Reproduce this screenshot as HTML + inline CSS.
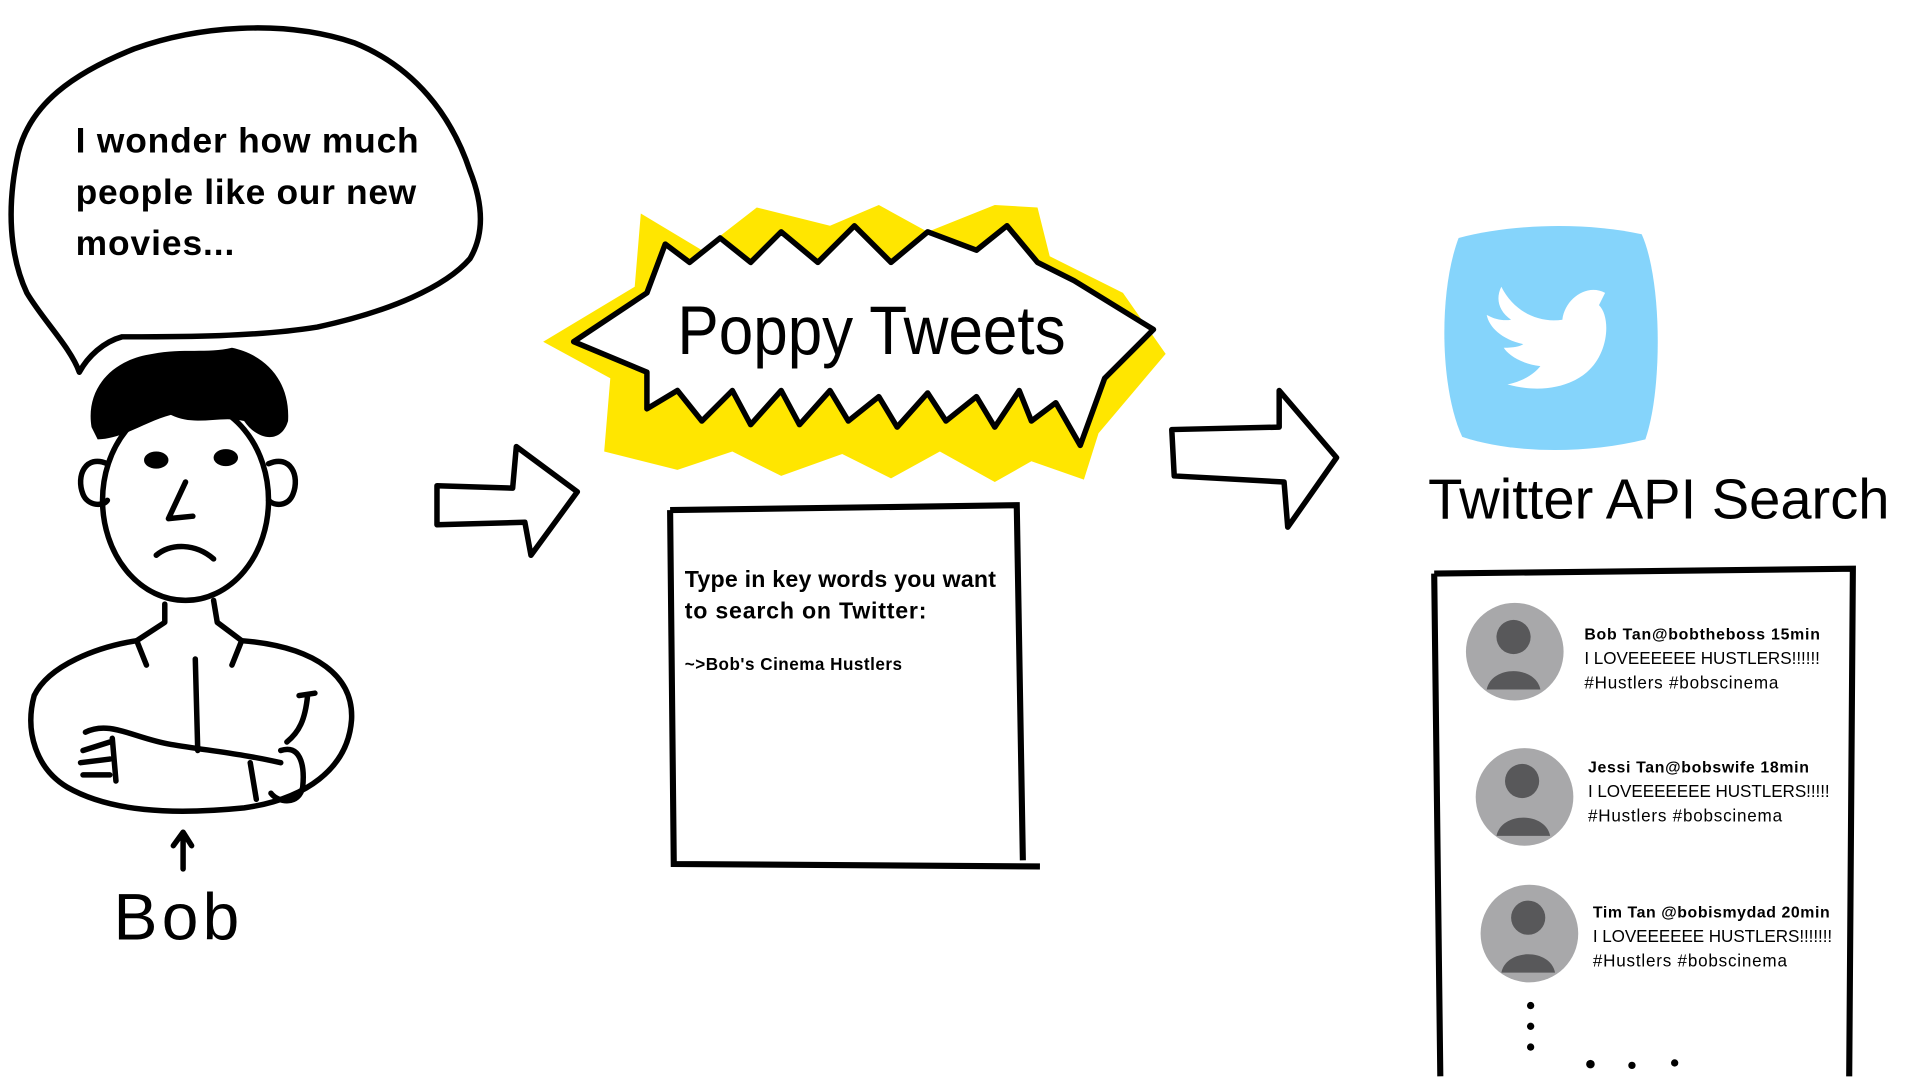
<!DOCTYPE html>
<html><head><meta charset="utf-8"><style>
html,body{margin:0;padding:0;background:#fff;width:1920px;height:1080px;overflow:hidden}
svg{display:block}
text{font-family:"Liberation Sans",sans-serif}
</style></head><body>
<svg width="1920" height="1080" viewBox="0 0 1573 885" preserveAspectRatio="none" xmlns="http://www.w3.org/2000/svg">
<rect width="1573" height="885" fill="#fff"/>
<g fill="none" stroke="#000" stroke-width="4.5" stroke-linecap="round" stroke-linejoin="round">
<path d="M65 305 C58 285 35 262 22 240 C8 210 5 170 15 125 C25 85 60 60 110 40 C160 22 230 15 290 35 C340 55 370 95 385 140 C395 165 398 190 385 212 C365 235 320 255 260 268 C210 276 150 276 100 276 C85 280 72 292 65 305"/>
<ellipse cx="152" cy="410" rx="68" ry="82"/>
<path d="M88 380 C70 372 62 390 68 405 C72 415 85 415 88 410"/>
<path d="M220 380 C238 372 246 390 240 405 C236 415 225 415 220 410"/>
<path d="M152 395 L138 425 L158 423"/>
<path d="M128 455 C140 445 160 445 175 458"/>
<path d="M135 495 L135 510 L112 525 L120 545 M175 492 L178 510 L198 525 L190 545"/>
<path d="M112 525 C80 530 40 545 28 570 C20 600 30 630 55 645 C90 665 140 668 200 662 C250 655 285 630 288 590 C290 555 260 530 198 525"/>
<path d="M160 540 L162 615"/>
<path d="M70 600 C90 590 110 605 140 610 C170 615 200 618 230 625"/>
<path d="M92 605 L95 640 M205 625 L210 655"/>
<path d="M68 615 L90 608 M66 625 L90 622 M68 635 L90 635"/>
<path d="M230 615 C245 610 250 625 248 645 C245 660 228 658 222 650"/>
<path d="M245 570 L258 568 M252 570 C250 590 245 600 235 608"/>
<path d="M150 712 L150 683 M142 693 L150 682 L157 693"/>
<path d="M358 398 L420 400 L423 366 L473 403 L435 455 L430 428 L358 430 Z"/>
<path d="M960 352 L1048 350 L1048 320 L1095 375 L1055 432 L1052 395 L962 390 Z"/>
</g>
<path d="M75 350 C70 320 90 295 125 290 C150 285 170 290 190 285 C215 290 238 310 236 345 C230 365 210 360 200 345 C180 340 160 350 140 340 C120 345 100 360 80 360 Z" fill="#000"/>
<ellipse cx="128" cy="377" rx="10" ry="7" fill="#000"/>
<ellipse cx="185" cy="375" rx="10" ry="7" fill="#000"/>
<text x="62" y="125" font-size="29" font-weight="bold" textLength="281">I wonder how much</text>
<text x="62" y="167" font-size="29" font-weight="bold" textLength="279">people like our new</text>
<text x="62" y="209" font-size="29" font-weight="bold" textLength="130">movies...</text>
<text x="93" y="770" font-size="54" textLength="103">Bob</text>
<path d="M445 280 L520 235 L525 175 L575 205 L620 170 L680 185 L720 168 L760 190 L815 168 L850 170 L860 210 L920 240 L955 290 L900 355 L888 393 L845 378 L815 395 L770 370 L730 392 L690 372 L640 390 L600 370 L555 385 L495 370 L500 310 Z" fill="#ffe600"/>
<path d="M470 280 L530 240 L545 200 L565 215 L590 195 L615 215 L640 190 L670 215 L700 185 L730 215 L760 190 L800 205 L825 185 L850 215 L880 230 L945 270 L905 310 L885 365 L865 330 L845 345 L835 320 L815 350 L800 325 L775 345 L760 322 L735 350 L720 325 L695 345 L680 320 L655 348 L640 320 L615 348 L600 320 L575 345 L555 320 L530 335 L530 305 Z" fill="#fff" stroke="#000" stroke-width="4.5" stroke-linejoin="round"/>
<text x="555" y="290" font-size="56" textLength="318" lengthAdjust="spacingAndGlyphs">Poppy Tweets</text>
<path d="M549 418 L833 414 L838 705 M852 710 L552 708 L549 418" fill="none" stroke="#000" stroke-width="5"/>
<text x="561" y="481" font-size="19" font-weight="bold" textLength="255">Type in key words you want</text>
<text x="561" y="507" font-size="19" font-weight="bold" textLength="198">to search on Twitter:</text>
<text x="561" y="549" font-size="14" font-weight="bold" textLength="178">~&gt;Bob's Cinema Hustlers</text>
<path d="M1195 195 C1240 183 1300 182 1345 192 C1362 230 1362 320 1348 360 C1300 372 1240 372 1198 358 C1180 320 1178 240 1195 195 Z" fill="#85d4fb"/>
<path d="M1230 235 C1240 255 1260 265 1280 262 C1282 245 1300 232 1315 240 L1310 250 C1320 260 1318 290 1300 305 C1285 318 1260 322 1235 315 C1250 312 1258 305 1262 300 C1245 298 1235 290 1232 285 C1240 285 1245 284 1248 282 C1230 278 1220 268 1218 258 C1225 262 1232 263 1238 262 C1228 255 1225 245 1230 235 Z" fill="#fff"/>
<text x="1170" y="425" font-size="46" textLength="378" lengthAdjust="spacingAndGlyphs">Twitter API Search</text>
<path d="M1175 470 L1518 466 L1515 882 M1175 470 L1180 882" fill="none" stroke="#000" stroke-width="5"/>
<g>
<circle cx="1241" cy="534" r="40" fill="#a8a8aa"/>
<ellipse cx="1240" cy="522" rx="14" ry="14" fill="#58585a"/>
<path d="M1218 565 C1222 545 1258 545 1262 565 Z" fill="#58585a"/>
<circle cx="1249" cy="653" r="40" fill="#a8a8aa"/>
<ellipse cx="1247" cy="640" rx="14" ry="14" fill="#58585a"/>
<path d="M1226 685 C1230 665 1266 665 1270 685 Z" fill="#58585a"/>
<circle cx="1253" cy="765" r="40" fill="#a8a8aa"/>
<ellipse cx="1252" cy="752" rx="14" ry="14" fill="#58585a"/>
<path d="M1230 797 C1234 777 1270 777 1274 797 Z" fill="#58585a"/>
</g>
<text x="1298" y="524" font-size="13" font-weight="bold" textLength="193">Bob Tan@bobtheboss  15min</text>
<text x="1298" y="544" font-size="14" textLength="193">I LOVEEEEEE HUSTLERS!!!!!!</text>
<text x="1298" y="564" font-size="14" textLength="159">#Hustlers #bobscinema</text>
<text x="1301" y="633" font-size="13" font-weight="bold" textLength="181">Jessi Tan@bobswife 18min</text>
<text x="1301" y="653" font-size="14" textLength="198">I LOVEEEEEEE HUSTLERS!!!!!</text>
<text x="1301" y="673" font-size="14" textLength="159">#Hustlers #bobscinema</text>
<text x="1305" y="752" font-size="13" font-weight="bold" textLength="194">Tim Tan @bobismydad 20min</text>
<text x="1305" y="772" font-size="14" textLength="196">I LOVEEEEEE HUSTLERS!!!!!!!</text>
<text x="1305" y="792" font-size="14" textLength="159">#Hustlers #bobscinema</text>
<g fill="#000">
<circle cx="1254" cy="824" r="3"/><circle cx="1254" cy="841" r="3"/><circle cx="1254" cy="858" r="3"/>
<circle cx="1303" cy="872" r="3.5"/><circle cx="1337" cy="873" r="3"/><circle cx="1372" cy="871" r="3"/>
</g>
</svg>
</body></html>
